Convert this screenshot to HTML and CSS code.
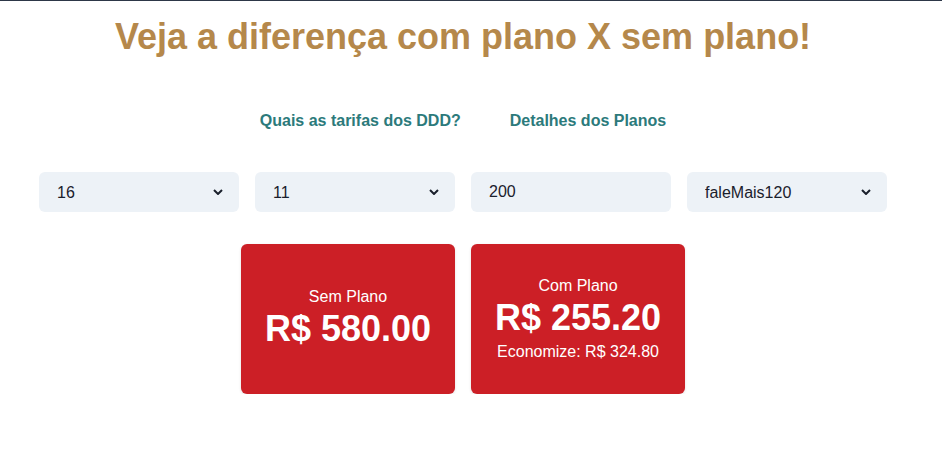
FILE: index.html
```html
<!DOCTYPE html>
<html lang="pt-BR">
<head>
<meta charset="utf-8">
<title>Veja a diferença</title>
<link rel="stylesheet" href="styles.css">
</head>
<body>
<div class="page">
  <h1 class="title">Veja a diferença com plano X sem plano!</h1>
  <nav class="links">
    <a class="link" href="#">Quais as tarifas dos DDD?</a>
    <a class="link" href="#">Detalhes dos Planos</a>
  </nav>
  <div class="controls">
    <div class="field">
      <select class="select"><option>16</option></select>
      <svg class="chev" width="10" height="6" viewBox="0 0 10 6"><path d="M1 1l4 4 4-4" fill="none" stroke="#1a202c" stroke-width="2"/></svg>
    </div>
    <div class="field">
      <select class="select"><option>11</option></select>
      <svg class="chev" width="10" height="6" viewBox="0 0 10 6"><path d="M1 1l4 4 4-4" fill="none" stroke="#1a202c" stroke-width="2"/></svg>
    </div>
    <div class="field">
      <input class="input" type="text" value="200">
    </div>
    <div class="field">
      <select class="select"><option>faleMais120</option></select>
      <svg class="chev" width="10" height="6" viewBox="0 0 10 6"><path d="M1 1l4 4 4-4" fill="none" stroke="#1a202c" stroke-width="2"/></svg>
    </div>
  </div>
  <div class="cards">
    <div class="card">
      <div class="label">Sem Plano</div>
      <div class="price">R$ 580.00</div>
    </div>
    <div class="card">
      <div class="label">Com Plano</div>
      <div class="price">R$ 255.20</div>
      <div class="save">Economize: R$ 324.80</div>
    </div>
  </div>
</div>
</body>
</html>
```
FILE: styles.css
```css
* { box-sizing: border-box; }
html, body { margin: 0; padding: 0; background: #fff; }
body {
  border-top: 1px solid #2d3748;
  font-family: "Liberation Sans", Arial, sans-serif;
  color: #1a202c;
}
.page {
  width: 926px;
  display: flex;
  flex-direction: column;
  align-items: center;
}
.title {
  margin: 12px 0 0;
  font-size: 36px;
  line-height: 48px;
  font-weight: 700;
  color: #b5884b;
}
.links {
  margin-top: 48px;
  display: flex;
  gap: 49px;
}
.link {
  font-size: 16px;
  font-weight: 700;
  color: #2c7a7b;
  text-decoration: none;
  line-height: 24px;
}
.controls {
  margin-top: 39px;
  display: flex;
  gap: 16px;
}
.field {
  width: 200px;
  height: 40px;
  background: #edf2f7;
  border-radius: 6px;
  display: flex;
  align-items: center;
  padding: 0 16px 0 16px;
}
.select, .input {
  flex: 1;
  min-width: 0;
  appearance: none;
  -webkit-appearance: none;
  background: transparent;
  border: none;
  outline: none;
  font-family: "Liberation Sans", Arial, sans-serif;
  font-size: 16px;
  color: #1a202c;
  padding: 0 0 0 2px;
  height: 40px;
}
.chev { flex: none; }
.cards {
  margin-top: 32px;
  display: flex;
  gap: 16px;
}
.card {
  width: 214px;
  height: 150px;
  background: #cc1f26;
  border-radius: 6px;
  box-shadow: 0 1px 3px rgba(0,0,0,0.12);
  color: #fff;
  display: flex;
  flex-direction: column;
  align-items: center;
  justify-content: center;
}
.label { font-size: 16px; line-height: 20px; }
.price { font-size: 36px; font-weight: 700; line-height: 44px; }
.label + .price + .save { margin-top: 2px; }
.card .label:first-child + .price + .save { margin-top: 2px; }
.save { font-size: 16px; line-height: 20px; }
```
